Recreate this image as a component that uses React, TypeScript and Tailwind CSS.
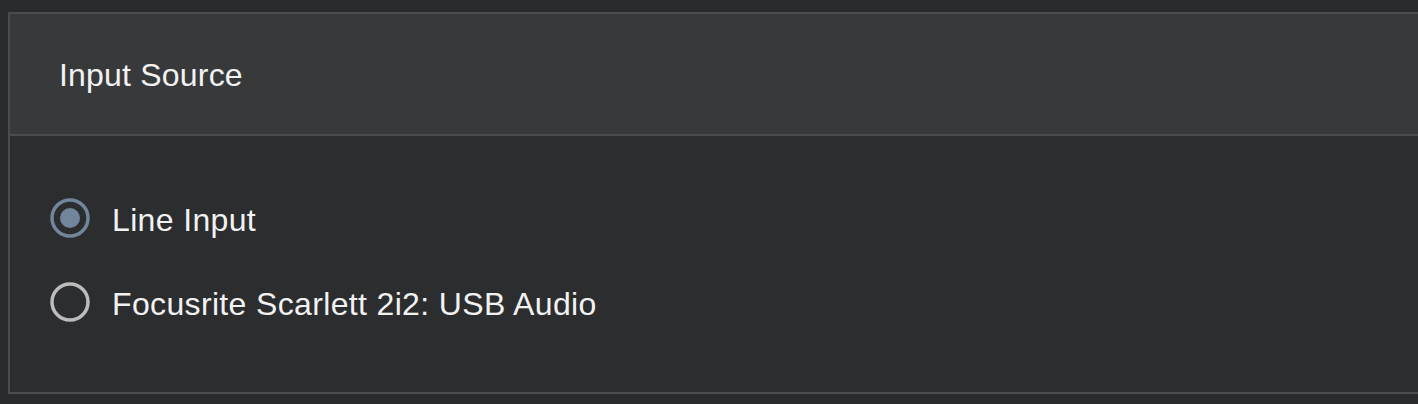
import React, { useState } from "react";

const options = ["Line Input", "Focusrite Scarlett 2i2: USB Audio"];

function Radio({ checked }: { checked: boolean }) {
  const color = checked ? "#71869b" : "#bcbcbc";
  return (
    <svg width="40" height="40" viewBox="0 0 40 40" className="shrink-0">
      <circle cx="20" cy="20" r="18" fill="none" stroke={color} strokeWidth="3.5" />
      {checked && <circle cx="20" cy="20" r="10" fill={color} />}
    </svg>
  );
}

export default function App() {
  const [sel, setSel] = useState(0);
  return (
    <div
      className="w-[1418px] h-[404px] bg-[#2a2b2d] pt-[12px] pl-[8px] overflow-hidden"
      style={{ fontFamily: '"Liberation Sans", Arial, Helvetica, sans-serif' }}
    >
      <div className="border-l-2 border-t-2 border-b-2 border-[#4b4c4e] w-[1420px]">
        <div className="h-[122px] bg-[#38393b] flex items-center pl-[49px] border-b-2 border-[#4b4c4e]">
          <span className="text-[32px] leading-none tracking-[0.2px] text-[#f2f2f2] pt-[2px]">Input Source</span>
        </div>
        <div className="h-[256px] bg-[#2c2d2f] pt-[62px] pl-[40px] flex flex-col gap-[44px]">
          {options.map((o, i) => (
            <div
              key={o}
              className="h-10 flex items-center gap-[22px] cursor-pointer"
              onClick={() => setSel(i)}
            >
              <Radio checked={sel === i} />
              <span className="text-[32px] leading-none tracking-[0.35px] text-[#f2f2f2] pt-[3px]">{o}</span>
            </div>
          ))}
        </div>
      </div>
    </div>
  );
}
